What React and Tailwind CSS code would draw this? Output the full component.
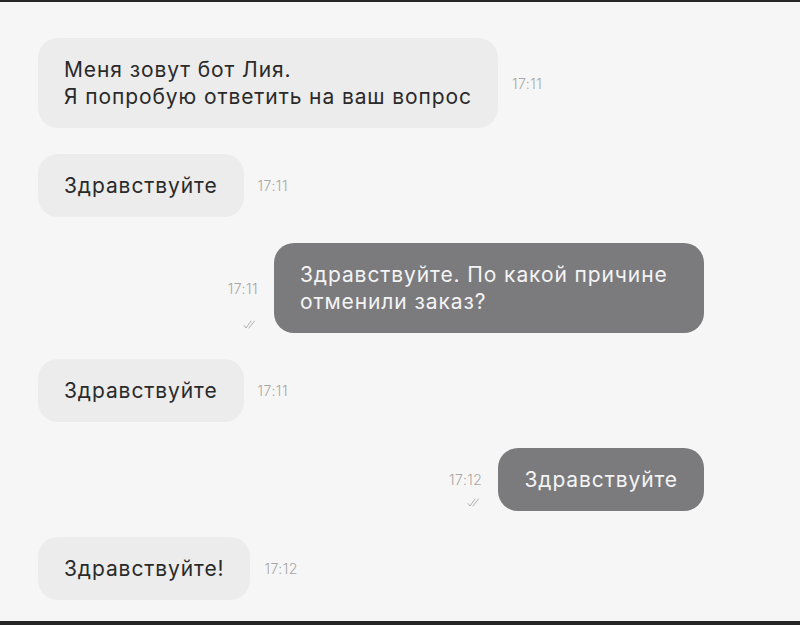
import React from "react";

function Checks() {
  return (
    <svg width="14" height="9" viewBox="0 0 14 9" fill="none" stroke="#b0b0b0" strokeWidth="1" strokeLinecap="round" strokeLinejoin="round">
      <path d="M1 5.5 L3 8 L8 1" />
      <path d="M6 8 L11.5 1" />
    </svg>
  );
}

function In({ lines, time }) {
  return (
    <div className="flex items-center">
      <div className="rounded-[20px] bg-[#ececec] px-[26px] py-[18px] text-[21px] leading-[27px] tracking-[0.9px] text-[#2a2a2a]">
        {lines.map((l, i) => (
          <div key={i}>{l}</div>
        ))}
      </div>
      <div className="ml-[14px] text-[14px] font-light tracking-[0.5px] text-[#a6a6a6]">{time}</div>
    </div>
  );
}

function Out({ lines, time, wide }) {
  return (
    <div className="flex items-stretch justify-end">
      <div className="relative mr-[16px] flex w-[36px] items-center justify-end">
        <div className="text-[14px] font-light tracking-[0.5px] text-[#a6a6a6]">{time}</div>
        <div className="absolute bottom-[4px] right-[1px]">
          <Checks />
        </div>
      </div>
      <div
        className={
          wide
            ? "w-[430px] rounded-[20px] bg-[#7b7b7e] px-[26px] py-[18px] text-[21px] leading-[27px] tracking-[0.9px] text-[#f4f4f4]"
            : "rounded-[20px] bg-[#7b7b7e] px-[26px] py-[18px] text-[21px] leading-[27px] tracking-[0.9px] text-[#f4f4f4]"
        }
      >
        {lines.map((l, i) => (
          <div key={i}>{l}</div>
        ))}
      </div>
    </div>
  );
}

export default function App() {
  return (
    <div
      className="flex h-[625px] w-[800px] flex-col gap-[26px] border-t-2 border-b-4 border-[#262626] bg-[#f6f6f6] pl-[38px] pr-[96px] pt-[36px]"
      style={{ fontFamily: "Inter, 'Noto Sans', sans-serif" }}
    >
      <In lines={["Меня зовут бот Лия.", "Я попробую ответить на ваш вопрос"]} time="17:11" />
      <In lines={["Здравствуйте"]} time="17:11" />
      <Out lines={["Здравствуйте. По какой причине", "отменили заказ?"]} time="17:11" wide />
      <In lines={["Здравствуйте"]} time="17:11" />
      <Out lines={["Здравствуйте"]} time="17:12" />
      <In lines={["Здравствуйте!"]} time="17:12" />
    </div>
  );
}
